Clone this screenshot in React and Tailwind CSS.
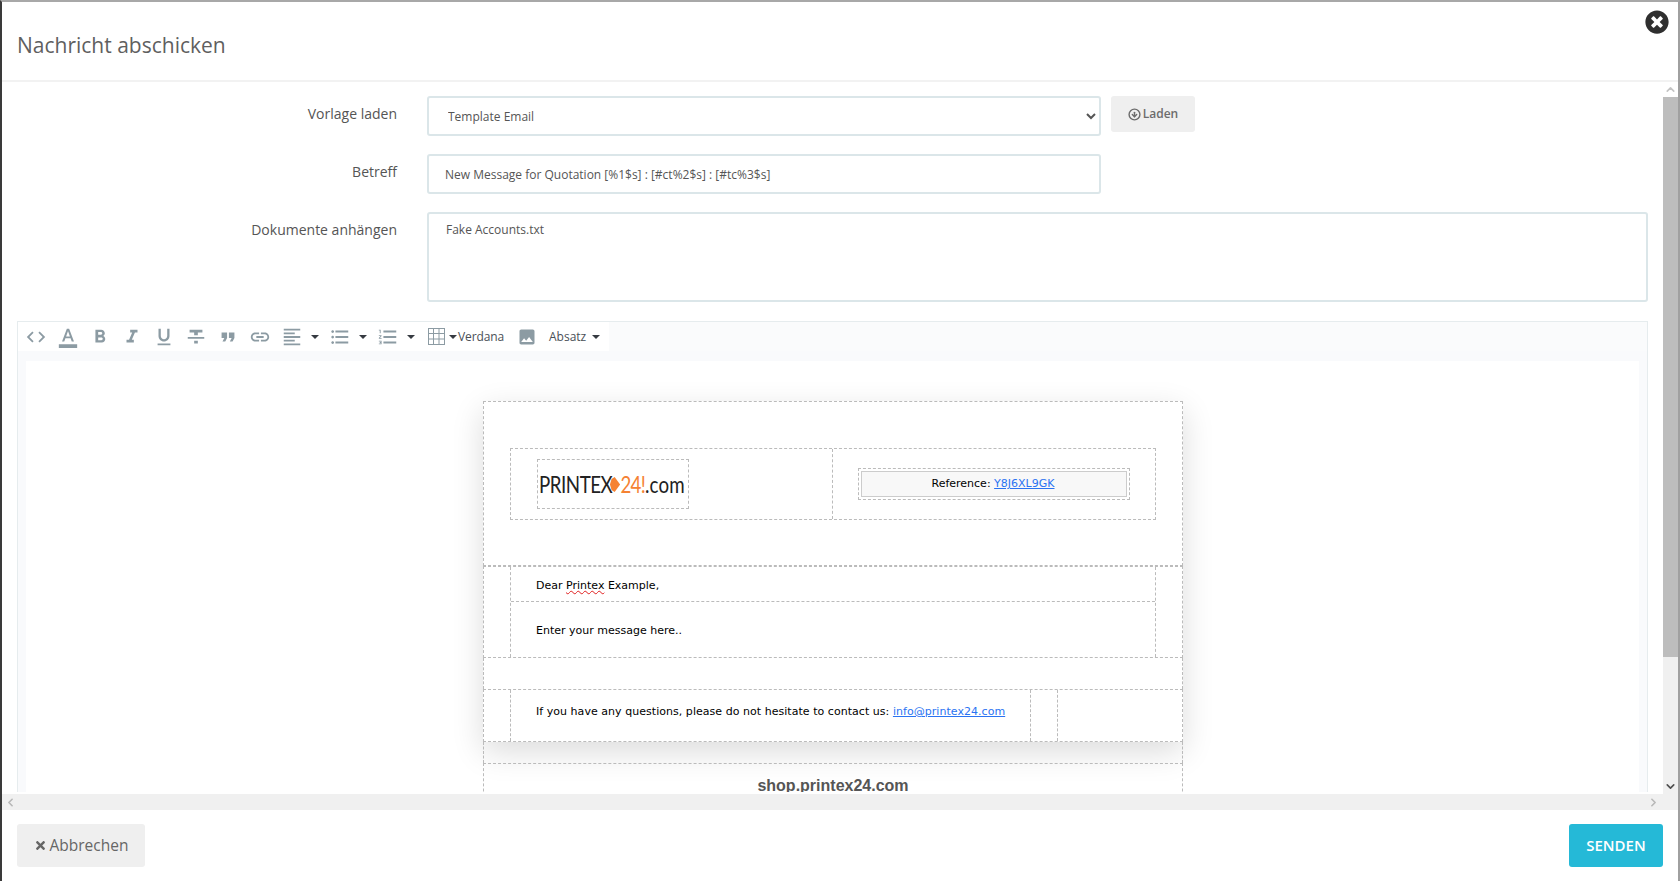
import { FaTimesCircle, FaTimes } from 'react-icons/fa'
import { LuCircleArrowDown } from 'react-icons/lu'
import { FiChevronUp, FiChevronDown, FiChevronLeft, FiChevronRight } from 'react-icons/fi'
import {
  MdCode,
  MdFormatColorText,
  MdFormatBold,
  MdFormatItalic,
  MdFormatUnderlined,
  MdFormatStrikethrough,
  MdFormatQuote,
  MdLink,
  MdFormatAlignLeft,
  MdFormatListBulleted,
  MdFormatListNumbered,
  MdImage,
} from 'react-icons/md'

const Caret = () => (
  <span className="inline-block w-0 h-0 border-x-[4px] border-x-transparent border-t-[4px] border-t-[#363a41]"></span>
)

const ToolButton = ({ icon: Icon }) => (
  <div className="w-[32px] h-[30px] flex items-center justify-center text-[#8c9ba3]">
    <Icon size={22} />
  </div>
)

const ToolDropdown = ({ icon: Icon }) => (
  <div className="w-[48px] h-[30px] flex items-center text-[#8c9ba3]">
    <div className="w-[32px] flex justify-center">
      <Icon size={22} />
    </div>
    <div className="ml-[3px] flex">
      <Caret />
    </div>
  </div>
)

const Toolbar = () => (
  <div className="h-[30px] flex bg-[#fafbfc] border-t border-[#e6ecee]">
    <div className="flex items-center pl-[2px] bg-white w-[591px]">
      <ToolButton icon={MdCode} />
      <ToolButton icon={MdFormatColorText} />
      <ToolButton icon={MdFormatBold} />
      <ToolButton icon={MdFormatItalic} />
      <ToolButton icon={MdFormatUnderlined} />
      <ToolButton icon={MdFormatStrikethrough} />
      <ToolButton icon={MdFormatQuote} />
      <ToolButton icon={MdLink} />
      <ToolDropdown icon={MdFormatAlignLeft} />
      <ToolDropdown icon={MdFormatListBulleted} />
      <ToolDropdown icon={MdFormatListNumbered} />
      <div className="w-[32px] flex justify-center">
        <svg width="17" height="17" viewBox="0 0 17 17" fill="none" stroke="#8c9ba3" strokeWidth="1">
          <rect x="0.5" y="0.5" width="16" height="16" />
          <path d="M5.5 0.5v16M11 0.5v16M0.5 5.5h16M0.5 11h16" />
        </svg>
      </div>
      <div className="flex ml-[-3px]">
        <Caret />
      </div>
      <span className="ml-[1px] w-[54px] text-[12px] tracking-[-0.1px] text-[#4a4f57]">Verdana</span>
      <div className="w-[32px] flex justify-center text-[#8c9ba3] ml-[-1px]">
        <MdImage size={20} />
      </div>
      <span className="ml-[6px] text-[12px] text-[#4a4f57]">Absatz</span>
      <div className="flex ml-[6px]">
        <Caret />
      </div>
    </div>
  </div>
)

const Logo = () => (
  <div className="flex items-center origin-left scale-x-[0.78] whitespace-nowrap font-['Lato',sans-serif] text-[24px] leading-none text-[#222]">
    <span className="tracking-[-0.6px]">PRINTE</span>
    <span className="tracking-[-2px]">X</span>
    <svg width="15" height="17" viewBox="0 0 15 17" className="shrink-0 ml-[-3px]">
      <path d="M14 8.5 7 1 3 3 1 8.5 3 14 7 16Z" fill="#f58233" />
    </svg>
    <span className="text-[#f58233] tracking-[-1px]">24!</span>
    <span className="tracking-[0.2px]">.com</span>
  </div>
)

const EmailTop = () => (
  <div className="bg-white shadow-[0_10px_30px_rgba(0,0,0,0.14)]">
    {/* Logo and reference */}
    <div className="h-[165px] border border-dashed border-[#bbb] pt-[46px] pl-[26px] pr-[26px]">
      <div className="flex h-[72px] border border-dashed border-[#bbb]">
        <div className="w-[322px] border-r border-dashed border-[#bbb] pl-[26px] pt-[10px]">
          <div className="w-[152px] h-[50px] border border-dashed border-[#bbb] flex items-center pl-[1px]">
            <Logo />
          </div>
        </div>
        <div className="flex-1 pl-[25px] pt-[19px]">
          <div className="w-[272px] h-[32px] border border-dashed border-[#bbb] p-[2px]">
            <div className="h-full border border-[#ccc] bg-[#f8f8f8] flex items-center justify-center pt-[1px] pr-[2px] font-['DejaVu_Sans',sans-serif] text-[11px] text-black">
              <span>Reference:&nbsp;</span>
              <span className="text-[#2a73f2] underline">Y8J6XL9GK</span>
            </div>
          </div>
        </div>
      </div>
    </div>

    {/* Greeting and message */}
    <div className="flex h-[92px] border border-dashed border-[#bbb] font-['DejaVu_Sans',sans-serif] text-[11px] text-black">
      <div className="w-[26px]"></div>
      <div className="flex-1 flex flex-col border-x border-dashed border-[#bbb]">
        <div className="h-[35px] border-b border-dashed border-[#bbb] pl-[25px] pt-[11px] leading-4">
          Dear{' '}
          <span className="underline decoration-wavy decoration-[#e02020] decoration-1">Printex</span>{' '}
          Example,
        </div>
        <div className="flex-1 pl-[25px] pt-[21px] leading-4">Enter your message here..</div>
      </div>
      <div className="w-[26px]"></div>
    </div>

    <div className="h-[31px] border-x border-dashed border-[#bbb]"></div>

    {/* Contact row */}
    <div className="flex h-[53px] border border-dashed border-[#bbb]">
      <div className="flex w-[574px] border-r border-dashed border-[#bbb] font-['DejaVu_Sans',sans-serif] text-[11px] tracking-[0.04px] text-black">
        <div className="w-[26px]"></div>
        <div className="w-[521px] border-x border-dashed border-[#bbb] pl-[25px] pt-[14px] leading-4 whitespace-nowrap">
          If you have any questions, please do not hesitate to contact us:{' '}
          <span className="text-[#2a73f2] underline">info@printex24.com</span>
        </div>
      </div>
    </div>
  </div>
)

const Email = () => (
  <div className="w-[700px] ml-[457px] mt-[39px]">
    <EmailTop />
    <div className="h-[21px] border-x border-dashed border-[#bbb]"></div>
    <div className="border border-dashed border-[#bbb] pt-[12px] pb-[20px] text-center font-['Liberation_Sans',sans-serif] font-bold text-[16px] leading-5 text-[#555]">
      <span className="underline">shop.printex24.com</span>
    </div>
  </div>
)

const FormRow = ({ label, children }) => (
  <div className="flex items-start">
    <label className="w-[380px] pt-[8px] text-right text-[14px] leading-5 text-[#555]">{label}</label>
    <div className="ml-[30px] flex-1 flex">{children}</div>
  </div>
)

const App = () => {
  return (
    <div className="w-[1680px] h-[881px] overflow-hidden flex flex-col bg-white border-t-2 border-t-[#a8a8a8] border-l-2 border-l-[#3a3a3a] border-r-2 border-r-[#a0a0a0] font-['Open_Sans',sans-serif]">
      {/* Header */}
      <div className="h-[80px] shrink-0 flex justify-between border-b-2 border-[#f2f2f2]">
        <h1 className="pl-[15px] pt-[30px] text-[21px] leading-[26px] font-normal text-[#5f5f5f]">
          Nachricht abschicken
        </h1>
        <div className="pt-[8px] pr-[9px]">
          <FaTimesCircle size={24} className="text-[#2f2f2f]" />
        </div>
      </div>

      {/* Body */}
      <div className="h-[712px] shrink-0 flex">
        <div className="flex-1 min-w-0 overflow-hidden px-[15px] pt-[14px]">
          <div className="flex flex-col gap-[18px]">
            <FormRow label="Vorlage laden">
              <select
                defaultValue="email"
                className="w-[674px] h-[40px] pl-[15px] border-2 border-[#dbe6e9] rounded-[3px] bg-white text-[12px] text-[#555]"
              >
                <option value="email">Template Email</option>
              </select>
              <button className="ml-[10px] w-[84px] h-[36px] rounded-[3px] bg-[#efefef] flex items-center justify-center gap-[2px] text-[12px] font-semibold text-[#6c6c6c]">
                <LuCircleArrowDown size={13} strokeWidth={2.6} />
                Laden
              </button>
            </FormRow>
            <FormRow label="Betreff">
              <input
                readOnly
                value="New Message for Quotation [%1$s] : [#ct%2$s] : [#tc%3$s]"
                className="w-[674px] h-[40px] pl-[16px] border-2 border-[#dbe6e9] rounded-[3px] text-[12px] text-[#555]"
              />
            </FormRow>
            <FormRow label="Dokumente anhängen">
              <textarea
                readOnly
                value="Fake Accounts.txt"
                className="w-full h-[90px] pl-[17px] pt-[8px] border-2 border-[#dbe6e9] rounded-[3px] text-[12px] leading-4 text-[#555] resize-none"
              />
            </FormRow>
          </div>

          {/* Editor */}
          <div className="mt-[19px] h-[471px] border-x border-[#e6ecee] overflow-hidden">
            <Toolbar />
            <div className="h-[441px] bg-[#f9fafc] px-[8px] pt-[10px]">
              <div className="h-full bg-white overflow-hidden pt-[1px]">
                <Email />
              </div>
            </div>
          </div>
        </div>

        {/* Vertical scrollbar */}
        <div className="w-[15px] shrink-0 flex flex-col bg-[#f0f0f0]">
          <div className="h-[15px] bg-white flex items-center justify-center text-[#c4c4c4]">
            <FiChevronUp size={13} strokeWidth={3} />
          </div>
          <div className="h-[560px] bg-[#bdbdbd]"></div>
          <div className="flex-1"></div>
          <div className="h-[15px] flex items-center justify-center text-[#505050]">
            <FiChevronDown size={13} strokeWidth={3} />
          </div>
        </div>
      </div>

      {/* Horizontal scrollbar */}
      <div className="h-[16px] shrink-0 flex items-center justify-between px-[2px] pr-[18px] bg-[#f0f0f0] text-[#b8b8b8]">
        <FiChevronLeft size={13} strokeWidth={3} />
        <FiChevronRight size={13} strokeWidth={3} />
      </div>

      {/* Footer */}
      <div className="flex-1 flex justify-between px-[15px] pt-[14px]">
        <button className="w-[128px] h-[43px] rounded-[3px] bg-[#efefef] flex items-center justify-center gap-[3px] text-[15.5px] font-medium text-[#666]">
          <FaTimes size={13} />
          Abbrechen
        </button>
        <button className="w-[94px] h-[43px] rounded-[3px] bg-[#25b9d7] text-[15px] font-semibold text-white">
          SENDEN
        </button>
      </div>
    </div>
  )
}

export default App
